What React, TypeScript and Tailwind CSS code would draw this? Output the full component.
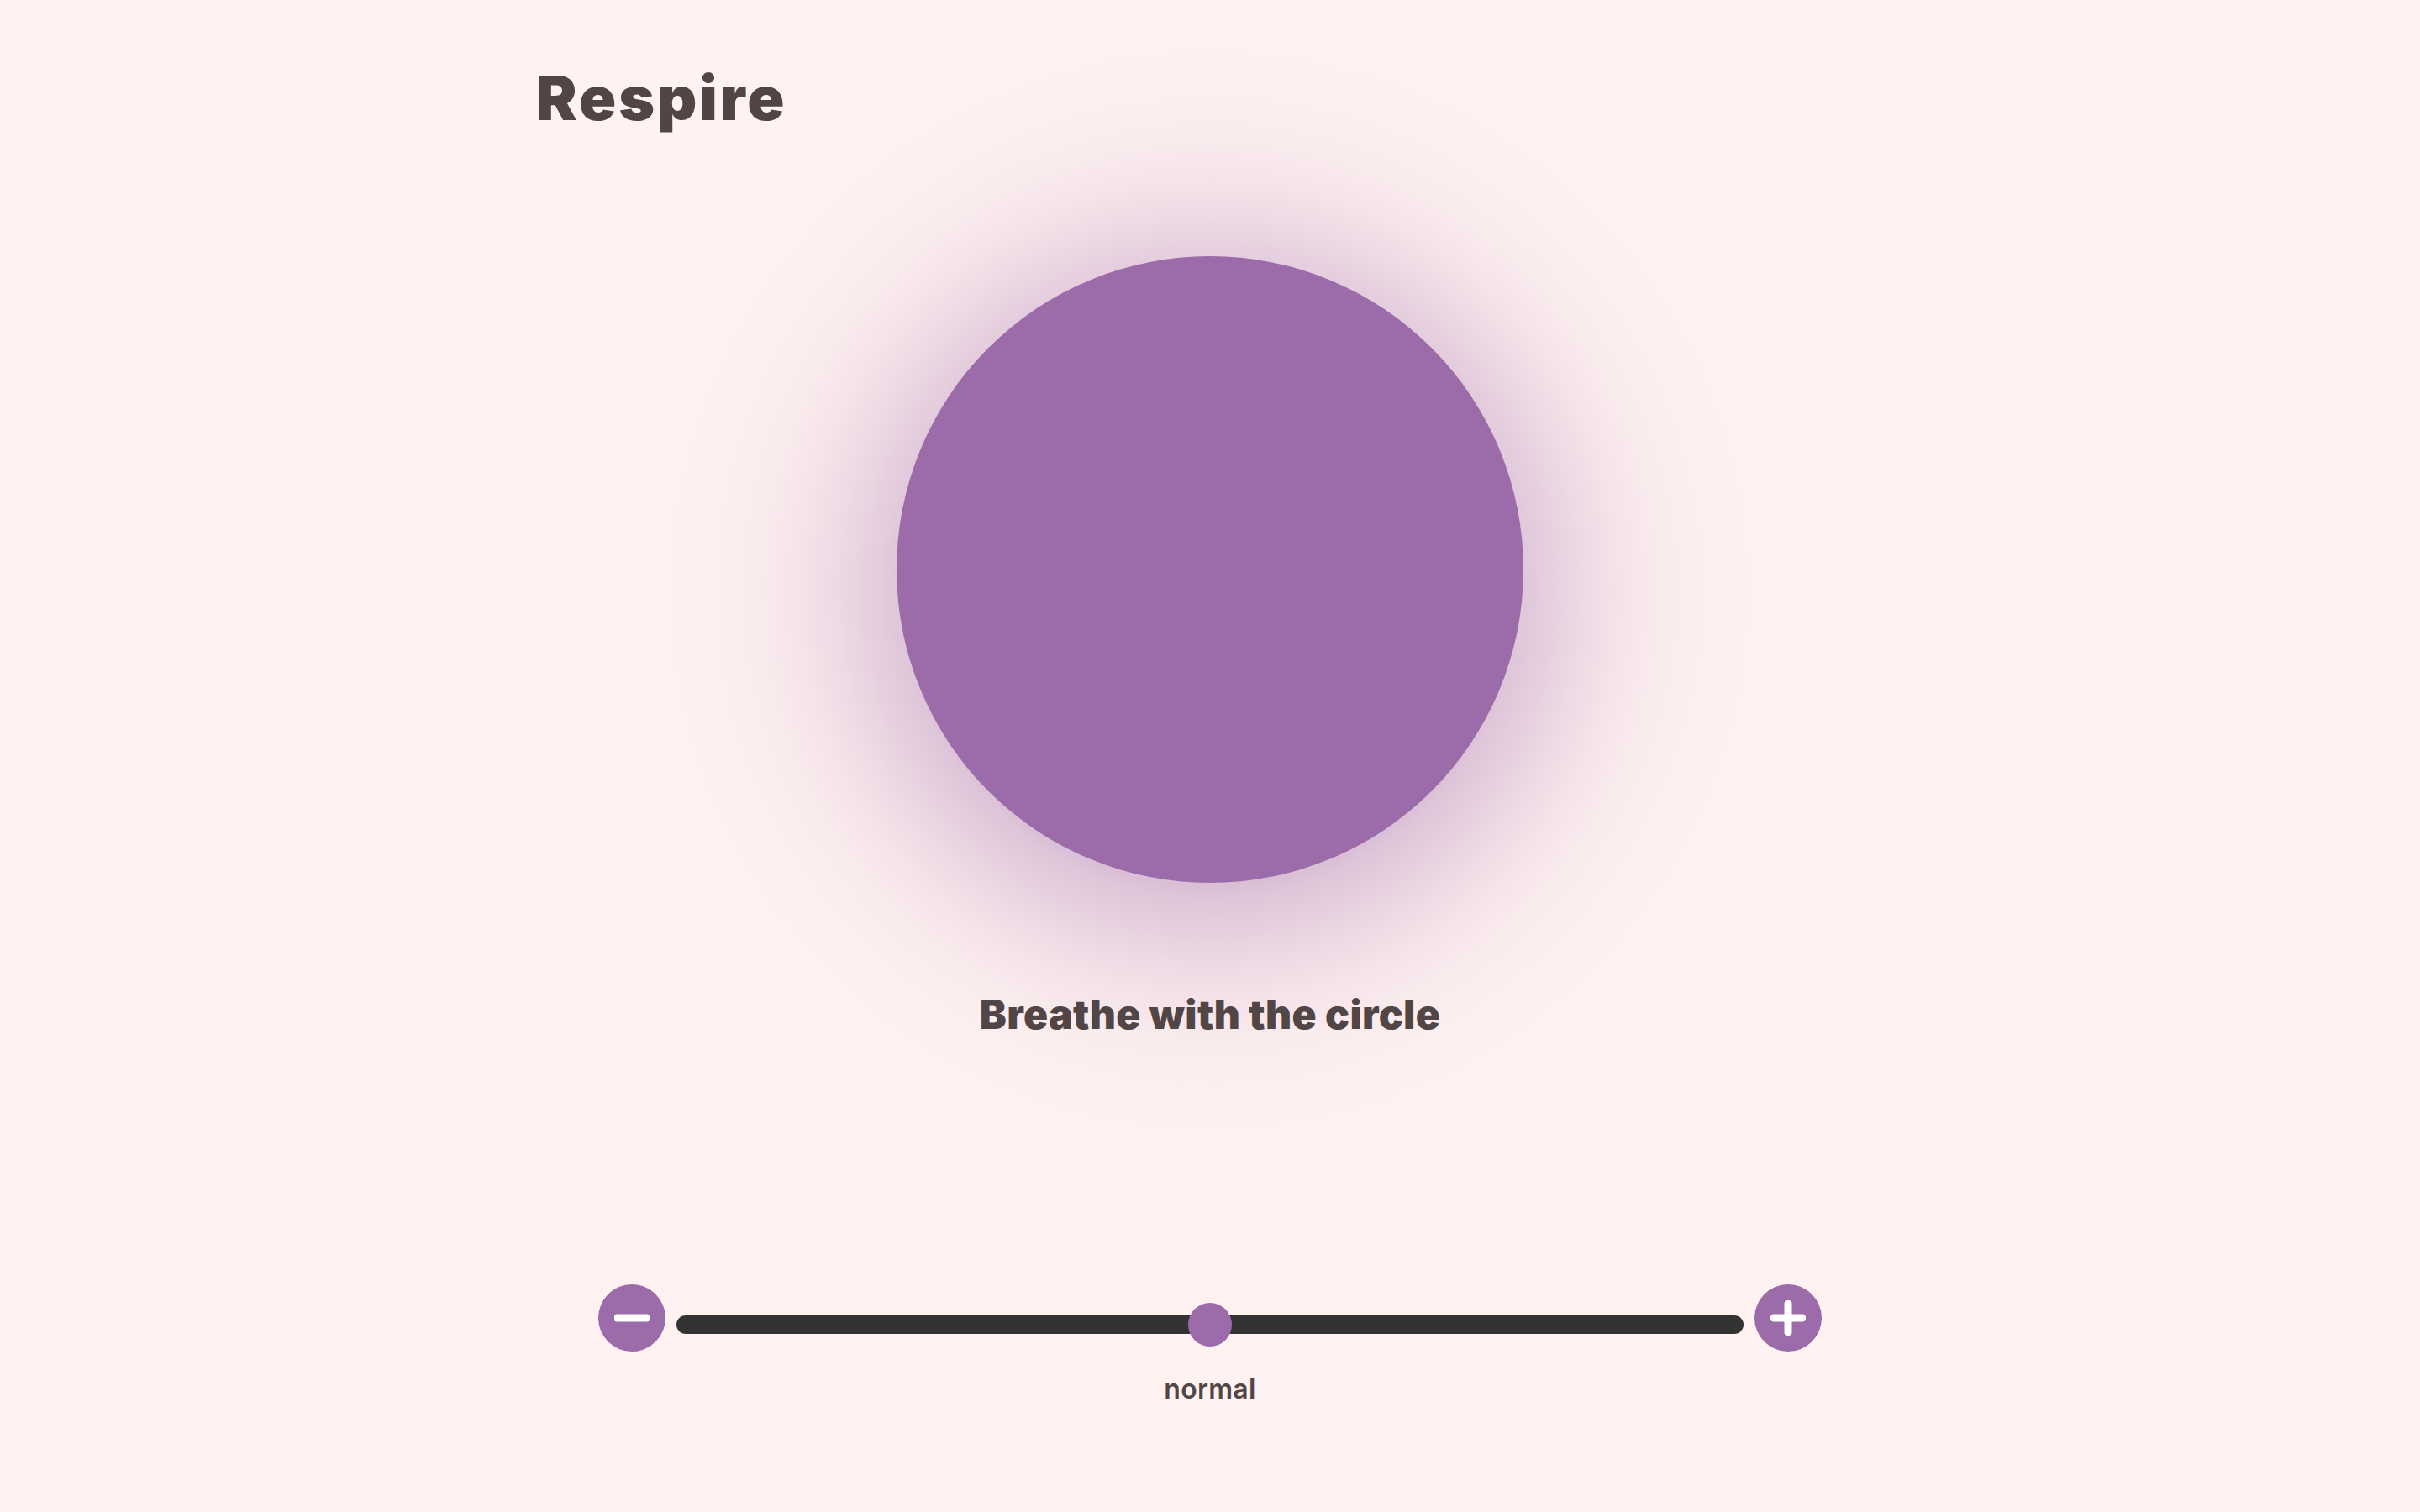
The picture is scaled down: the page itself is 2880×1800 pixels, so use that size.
export default function App() {
  return (
    <div className="min-h-screen w-full bg-[#fff2f1] text-[#514545] font-['Inter',sans-serif] overflow-hidden">
      <div className="mx-auto flex w-[1608px] flex-col">
        <h1 className="mt-[80px] ml-[2px] text-[73px] font-black leading-none tracking-[3px]">
          Respire
        </h1>

        {/* breathing circle with soft glow */}
        <div className="relative mt-[152px] flex justify-center">
          <div className="pointer-events-none absolute left-1/2 top-[-275px] h-[1346px] w-[1346px] -translate-x-1/2 rounded-full bg-[radial-gradient(circle_closest-side,rgba(156,107,170,0.38)_0%,rgba(156,107,170,0.38)_52%,rgba(156,107,170,0.32)_55%,rgba(156,107,170,0.26)_60%,rgba(156,107,170,0.18)_66%,rgba(156,107,170,0.105)_73%,rgba(156,107,170,0.05)_80%,rgba(156,107,170,0.018)_88%,rgba(156,107,170,0)_100%)]" />
          <div className="relative h-[746px] w-[746px] rounded-full bg-[#9c6baa]" />
        </div>

        <p className="relative mt-[133px] text-center text-[48px] font-black leading-none tracking-[0.4px]">
          Breathe with the circle
        </p>

        {/* speed control */}
        <div className="relative mt-[297px] flex items-center justify-center gap-[13px]">
          <button className="flex h-[80px] w-[80px] items-center justify-center rounded-full bg-[#9c6baa]">
            <svg width="42" height="42" viewBox="0 0 42 42">
              <rect x="0" y="16.5" width="42" height="9" rx="3" fill="#fff" />
            </svg>
          </button>
          <div className="relative mt-[16px] flex h-[22px] w-[1270px] items-center rounded-full bg-[#333333]">
            <div className="absolute left-1/2 h-[52px] w-[52px] -translate-x-1/2 rounded-full bg-[#9c6baa]" />
          </div>
          <button className="flex h-[80px] w-[80px] items-center justify-center rounded-full bg-[#9c6baa]">
            <svg width="42" height="42" viewBox="0 0 42 42">
              <rect x="0" y="16.5" width="42" height="9" rx="4" fill="#fff" />
              <rect x="16.5" y="0" width="9" height="42" rx="4" fill="#fff" />
            </svg>
          </button>
        </div>
        <p className="mt-[29px] text-center text-[32px] font-semibold leading-none tracking-[0.3px]">normal</p>
      </div>
    </div>
  )
}
